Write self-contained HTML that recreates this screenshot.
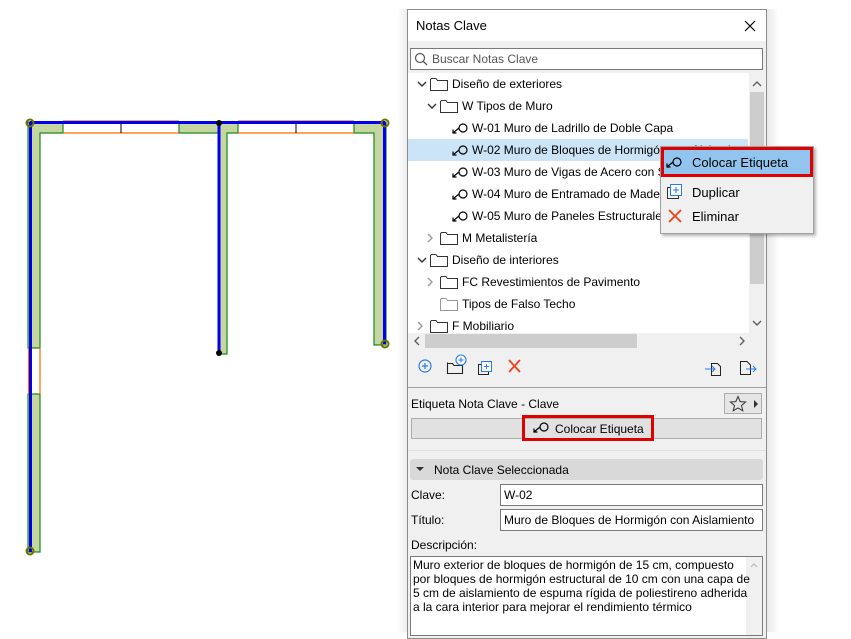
<!DOCTYPE html>
<html><head><meta charset="utf-8"><style>
*{margin:0;padding:0;box-sizing:border-box}
body{width:851px;height:632px;background:#fff;position:relative;overflow:hidden;font-family:"Liberation Sans",sans-serif;font-size:12px;color:#000}
.a{position:absolute}
.t{position:absolute;white-space:nowrap;font-size:12px;line-height:14px}
.row{position:absolute;left:408px;width:340px;height:22px}
</style></head><body>
<svg class="a" style="left:0;top:0" width="400" height="632">
<defs>
<g id="tick"><circle r="3.5" fill="none" stroke="#707000" stroke-width="2"/></g>
</defs>
<g fill="#c5d6a0" stroke="#1a8a1a" stroke-width="1.2">
<path d="M28 122 H63 V133 H40 V348 H28 Z"/>
<rect x="28" y="394" width="12" height="158"/>
<path d="M179 122 H238 V133 H227 V354 H219 V133 H179 Z"/>
<path d="M354 122 H386 V345 H374 V133 H354 Z"/>
</g>
<g stroke="#ff6a00" stroke-width="1.2" fill="none">
<line x1="63" y1="121" x2="179" y2="121"/><line x1="63" y1="133" x2="179" y2="133"/>
<line x1="238" y1="121" x2="354" y2="121"/><line x1="238" y1="133" x2="354" y2="133"/>
<line x1="28.5" y1="348" x2="28.5" y2="394"/><line x1="40" y1="348" x2="40" y2="394"/>
</g>
<g stroke="#000" stroke-width="1"><line x1="121" y1="122" x2="121" y2="133"/><line x1="296" y1="122" x2="296" y2="133"/></g>
<g stroke="#0000ee" stroke-width="3" fill="none">
<line x1="30" y1="122.5" x2="385" y2="122.5"/>
<line x1="30.5" y1="122" x2="30.5" y2="552"/>
<line x1="219" y1="122" x2="219" y2="353"/>
<line x1="384.5" y1="122" x2="384.5" y2="344"/>
</g>
<use href="#tick" x="30" y="123"/><use href="#tick" x="385" y="123"/><use href="#tick" x="385" y="344"/><use href="#tick" x="30" y="551"/>
<circle cx="219" cy="123" r="3" fill="#000"/><circle cx="219" cy="353" r="3" fill="#000"/>
</svg>
<div class="a" style="left:767px;top:9px;width:12px;height:623px;background:linear-gradient(to right,#e8e8e8,#fff)"></div>
<div class="a" style="left:397px;top:9px;width:10px;height:623px;background:linear-gradient(to left,#ececec,#fff)"></div>
<div class="a" style="left:407px;top:9px;width:360px;height:630px;background:#f0f0f0;border:1px solid #8c8c8c"></div>
<div class="a" style="left:408px;top:10px;width:358px;height:31px;background:#fff"></div>
<div class="t" style="left:416px;top:19px;font-size:13px">Notas Clave</div>
<svg class="a" style="left:744px;top:20px" width="12" height="12"><path d="M1 1L11 11M11 1L1 11" stroke="#000" stroke-width="1.2"/></svg>
<div class="a" style="left:410px;top:48px;width:353px;height:22px;background:#fff;border:1px solid #7a7a7a"></div>
<svg class="a" style="left:414px;top:52px" width="14" height="14"><circle cx="6" cy="6" r="4.5" fill="none" stroke="#555" stroke-width="1.2"/><line x1="9.3" y1="9.3" x2="13" y2="13" stroke="#555" stroke-width="1.3"/></svg>
<div class="t" style="left:432px;top:52px;color:#555">Buscar Notas Clave</div>
<div class="a" style="left:408px;top:73px;width:341px;height:260px;background:#fff"></div>
<div class="a" style="left:749px;top:73px;width:16px;height:260px;background:#f0f0f0"></div>
<div class="a" style="left:750px;top:92px;width:14px;height:192px;background:#cdcdcd"></div>
<svg class="a" style="left:749px;top:73px" width="16" height="260"><path d="M4 13L8 9L12 13" fill="none" stroke="#606060" stroke-width="1.4"/><path d="M4 248L8 252L12 248" fill="none" stroke="#606060" stroke-width="1.4"/></svg>
<div class="a" style="left:408px;top:333px;width:357px;height:16px;background:#f0f0f0"></div>
<div class="a" style="left:425px;top:334px;width:212px;height:14px;background:#cdcdcd"></div>
<svg class="a" style="left:408px;top:333px" width="357" height="16"><path d="M11 4L7 8L11 12" fill="none" stroke="#606060" stroke-width="1.4"/><path d="M332 4L336 8L332 12" fill="none" stroke="#606060" stroke-width="1.4"/></svg>
<div class="row" style="top:139px;background:#cce4f7"></div>
<svg class="a" style="left:408px;top:73px" width="340" height="260">
<defs>
<g id="f"><path d="M0.5 2.5V13.5H17.5V3.5H7.5L6 1.5H1.5Z" fill="#fff" stroke="#333" stroke-width="1"/></g>
<g id="fl"><path d="M0.5 2.5V13.5H17.5V3.5H7.5L6 1.5H1.5Z" fill="#fff" stroke="#999" stroke-width="1"/></g>
<g id="tag"><circle cx="11" cy="5" r="4" fill="none" stroke="#000" stroke-width="1.2"/><path d="M7 5L1.5 9.5M1 6.5V10H4.5" fill="none" stroke="#000" stroke-width="1.2"/></g>
<path id="dn" d="M0 0L4 4L8 0" fill="none" stroke="#333" stroke-width="1.4"/>
<path id="rt" d="M0 0L4 4L0 8" fill="none" stroke="#999" stroke-width="1.4"/>
</defs>
<use href="#dn" x="10" y="9"/><use href="#f" x="22" y="4"/>
<use href="#dn" x="20" y="31"/><use href="#f" x="32" y="26"/>
<use href="#tag" x="44" y="50"/><use href="#tag" x="44" y="72"/><use href="#tag" x="44" y="94"/><use href="#tag" x="44" y="116"/><use href="#tag" x="44" y="138"/>
<use href="#rt" x="20" y="161"/><use href="#f" x="32" y="158"/>
<use href="#dn" x="10" y="185"/><use href="#f" x="22" y="180"/>
<use href="#rt" x="20" y="205"/><use href="#f" x="32" y="202"/>
<use href="#fl" x="32" y="224"/>
<use href="#rt" x="10" y="249"/><use href="#f" x="22" y="246"/>
</svg>
<div class="t" style="left:452px;top:77px">Diseño de exteriores</div>
<div class="t" style="left:462px;top:99px">W Tipos de Muro</div>
<div class="t" style="left:472px;top:121px">W-01 Muro de Ladrillo de Doble Capa</div>
<div class="t" style="left:472px;top:143px">W-02 Muro de Bloques de Hormigón con Aislamiento</div>
<div class="t" style="left:472px;top:165px">W-03 Muro de Vigas de Acero con Sistema</div>
<div class="t" style="left:472px;top:187px">W-04 Muro de Entramado de Madera</div>
<div class="t" style="left:472px;top:209px">W-05 Muro de Paneles Estructurales</div>
<div class="t" style="left:462px;top:231px">M Metalistería</div>
<div class="t" style="left:452px;top:253px">Diseño de interiores</div>
<div class="t" style="left:462px;top:275px">FC Revestimientos de Pavimento</div>
<div class="t" style="left:462px;top:297px">Tipos de Falso Techo</div>
<div class="t" style="left:452px;top:319px">F Mobiliario</div>
<svg class="a" style="left:414px;top:354px" width="350" height="24">
<circle cx="11" cy="12" r="6" fill="none" stroke="#2b7de9" stroke-width="1.2"/><path d="M8 12H14M11 9V15" stroke="#2b7de9" stroke-width="1.2"/>
<path d="M33.5 8.5V19.5H48.5V11.5H40L38.5 9.5H33.5Z" fill="none" stroke="#222" stroke-width="1.1"/>
<circle cx="47" cy="6" r="5" fill="#fff" stroke="#2b7de9" stroke-width="1.1"/><path d="M44.5 6H49.5M47 3.5V8.5" stroke="#2b7de9" stroke-width="1.1"/>
<rect x="64.5" y="10.5" width="10" height="10" fill="none" stroke="#222"/><rect x="67.5" y="7.5" width="10" height="10" fill="#fff" stroke="#2b7de9"/><path d="M70 12.5H75M72.5 10V15" stroke="#2b7de9"/>
<path d="M95 6L106 18M106 6L95 18" stroke="#f0401a" stroke-width="1.8"/>
<path d="M297.5 9.5V21.5H306.5V12.5L303.5 9.5Z" fill="none" stroke="#222"/><path d="M291 15H301M298 12L301 15L298 18" fill="none" stroke="#2b7de9"/>
<path d="M326.5 7.5V20.5H336.5V11L333 7.5Z" fill="none" stroke="#222"/><path d="M332 15H342M339 12L342 15L339 18" fill="none" stroke="#2b7de9"/>
</svg>
<div class="a" style="left:408px;top:387px;width:358px;height:1px;background:#a0a0a0"></div>
<div class="t" style="left:411px;top:397px">Etiqueta Nota Clave - Clave</div>
<div class="a" style="left:724px;top:393px;width:38px;height:21px;border:1px solid #adadad;background:#e5e5e5"></div>
<svg class="a" style="left:729px;top:395px" width="32" height="18"><path d="M9 1.5L11.2 6.6L16.6 7L12.5 10.5L13.8 15.8L9 13L4.2 15.8L5.5 10.5L1.4 7L6.8 6.6Z" fill="none" stroke="#333" stroke-width="1"/><path d="M25 5L29 9L25 13Z" fill="#333"/></svg>
<div class="a" style="left:411px;top:418px;width:351px;height:21px;border:1px solid #adadad;background:#e1e1e1"></div>
<div class="a" style="left:522px;top:415px;width:132px;height:26px;border:3px solid #e00000"></div>
<svg class="a" style="left:533px;top:422px" width="18" height="12"><circle cx="11" cy="5" r="4" fill="none" stroke="#000" stroke-width="1.2"/><path d="M7 5L1.5 9.5M1 6.5V10H4.5" fill="none" stroke="#000" stroke-width="1.2"/></svg>
<div class="t" style="left:555px;top:422px">Colocar Etiqueta</div>
<div class="a" style="left:408px;top:450px;width:358px;height:1px;background:#e0e0e0"></div>
<div class="a" style="left:410px;top:459px;width:353px;height:21px;background:#d9d9d9;border-radius:3px"></div>
<svg class="a" style="left:415px;top:466px" width="10" height="8"><path d="M1 1H9L5 5Z" fill="#333"/></svg>
<div class="t" style="left:434px;top:463px">Nota Clave Seleccionada</div>
<div class="t" style="left:411px;top:488px">Clave:</div>
<div class="a" style="left:500px;top:484px;width:263px;height:22px;background:#fff;border:1px solid #7a7a7a"></div>
<div class="t" style="left:504px;top:488px">W-02</div>
<div class="t" style="left:411px;top:513px">Título:</div>
<div class="a" style="left:500px;top:509px;width:263px;height:22px;background:#fff;border:1px solid #7a7a7a"></div>
<div class="t" style="left:504px;top:513px">Muro de Bloques de Hormigón con Aislamiento</div>
<div class="t" style="left:411px;top:538px">Descripción:</div>
<div class="a" style="left:410px;top:556px;width:353px;height:80px;background:#fff;border:1px solid #7a7a7a"></div>
<div class="a" style="left:746px;top:557px;width:16px;height:78px;background:#f0f0f0"></div>
<svg class="a" style="left:746px;top:557px" width="16" height="16"><path d="M5 10L8 7L11 10" fill="none" stroke="#bbb" stroke-width="1.2"/></svg>
<div class="a" style="left:413px;top:558px;font-size:12px;line-height:14px;white-space:nowrap">Muro exterior de bloques de hormigón de 15 cm, compuesto<br>por bloques de hormigón estructural de 10 cm con una capa de<br>5 cm de aislamiento de espuma rígida de poliestireno adherida<br>a la cara interior para mejorar el rendimiento térmico</div>
<div class="a" style="left:660px;top:146px;width:154px;height:88px;background:#f0f0f0;border:1px solid #a0a0a0;box-shadow:2px 2px 3px rgba(0,0,0,0.3)"></div>
<div class="a" style="left:661px;top:147px;width:152px;height:30px;border:3px solid #e00000;background:#91c4ee"></div>
<svg class="a" style="left:666px;top:157px" width="18" height="12"><circle cx="11" cy="5" r="4" fill="none" stroke="#000" stroke-width="1.2"/><path d="M7 5L1.5 9.5M1 6.5V10H4.5" fill="none" stroke="#000" stroke-width="1.2"/></svg>
<div class="t" style="left:692px;top:156px;font-size:13px">Colocar Etiqueta</div>
<svg class="a" style="left:667px;top:184px" width="16" height="16"><rect x="0.5" y="3.5" width="11" height="11" fill="none" stroke="#333"/><rect x="3.5" y="0.5" width="11" height="11" fill="#fff" stroke="#2b7de9"/><path d="M6 6H12M9 3V9" stroke="#2b7de9"/></svg>
<div class="t" style="left:692px;top:186px;font-size:13px">Duplicar</div>
<svg class="a" style="left:668px;top:209px" width="14" height="14"><path d="M1 1L13 13M13 1L1 13" stroke="#f0401a" stroke-width="1.8"/></svg>
<div class="t" style="left:692px;top:210px;font-size:13px">Eliminar</div>
</body></html>
